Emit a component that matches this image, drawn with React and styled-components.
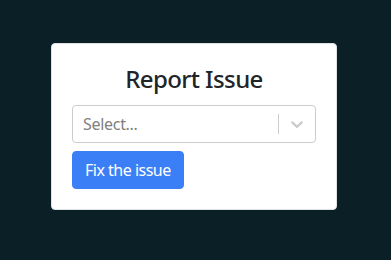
import React from 'react'
import styled, { createGlobalStyle } from 'styled-components'

const GlobalStyle = createGlobalStyle`
  html, body {
    margin: 0;
    padding: 0;
    background: #0b1f26;
  }
  body {
    font-family: 'Noto Sans', 'Open Sans', sans-serif;
    color: #212529;
  }
`

const Page = styled.main`
  min-height: 260px;
  box-sizing: border-box;
  padding: 43px 0 0 51px;
`

const Card = styled.section`
  width: 286px;
  box-sizing: border-box;
  background: #fff;
  border: 1px solid #dee2e6;
  border-radius: 4px;
  padding: 20px;
  display: flex;
  flex-direction: column;
  align-items: flex-start;
`

const Title = styled.h2`
  align-self: stretch;
  margin: 0 0 12px;
  font-size: 24px;
  line-height: 29px;
  font-weight: 500;
  letter-spacing: -0.6px;
  text-align: center;
  color: #212529;
`

const Control = styled.div`
  align-self: stretch;
  height: 38px;
  box-sizing: border-box;
  display: flex;
  align-items: center;
  border: 1px solid #cccccc;
  border-radius: 4px;
  background: #fff;
  margin-bottom: 8px;
`

const Placeholder = styled.div`
  flex: 1;
  padding: 2px 8px;
  span {
    margin: 0 2px;
    color: #808080;
    font-size: 16px;
    letter-spacing: -0.3px;
  }
`

const Separator = styled.span`
  width: 1px;
  align-self: stretch;
  margin: 8px 0;
  background: #cccccc;
`

const Indicator = styled.div`
  display: flex;
  padding: 8px;
  color: #cccccc;
`

const Button = styled.button`
  font-family: inherit;
  font-size: 16px;
  line-height: 24px;
  letter-spacing: -0.5px;
  padding: 6px 12px;
  border: 1px solid #3b7ff6;
  border-radius: 4px;
  background: #3b7ff6;
  color: #fff;
  cursor: pointer;
`

const Chevron = () => (
  <svg width="20" height="20" viewBox="0 0 20 20" fill="currentColor" aria-hidden="true">
    <path d="M4.516 7.548c0.436-0.446 1.043-0.481 1.576 0l3.908 3.747 3.908-3.747c0.533-0.481 1.141-0.446 1.574 0 0.436 0.445 0.408 1.197 0 1.615-0.406 0.418-4.695 4.502-4.695 4.502-0.217 0.223-0.502 0.335-0.787 0.335s-0.57-0.112-0.789-0.335c0 0-4.287-4.084-4.695-4.502s-0.436-1.170 0-1.615z" />
  </svg>
)

const App = () => {
  return (
    <Page>
      <GlobalStyle />
      <Card>
        <Title>Report Issue</Title>
        <Control>
          <Placeholder>
            <span>Select...</span>
          </Placeholder>
          <Separator />
          <Indicator>
            <Chevron />
          </Indicator>
        </Control>
        <Button>Fix the issue</Button>
      </Card>
    </Page>
  )
}

export default App
